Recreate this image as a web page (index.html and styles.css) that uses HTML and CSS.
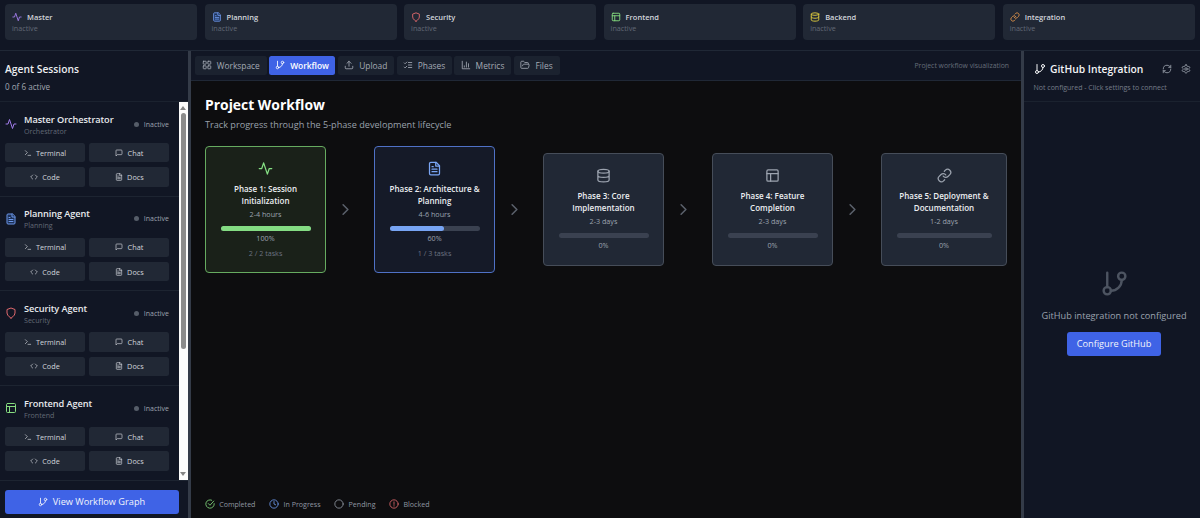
FILE: index.html
```
<!DOCTYPE html>
<html lang="en">
<head>
  <meta charset="UTF-8">
  <meta name="viewport" content="width=device-width, initial-scale=1.0">
  <title>Project Workflow</title>
  <link rel="stylesheet" href="styles.css">
</head>
<body>

  <!-- icon set -->
  <svg class="sprite">
    <symbol id="activity" viewBox="0 0 24 24"><path d="M22 12h-4l-3 9L9 3l-3 9H2"/></symbol>
    <symbol id="file" viewBox="0 0 24 24"><path d="M14.5 2H6a2 2 0 0 0-2 2v16a2 2 0 0 0 2 2h12a2 2 0 0 0 2-2V7.500z"/><path d="M14 2v6h6M16 13H8M16 17H8M10 9H8"/></symbol>
    <symbol id="shield" viewBox="0 0 24 24"><path d="M12 22s8-4 8-10V5l-8-3-8 3v7c0 6 8 10 8 10z"/></symbol>
    <symbol id="layout" viewBox="0 0 24 24"><rect x="3" y="3" width="18" height="18" rx="2"/><path d="M3 9h18M9 21V9"/></symbol>
    <symbol id="database" viewBox="0 0 24 24"><ellipse cx="12" cy="5" rx="9" ry="3"/><path d="M3 5v14c0 1.700 4 3 9 3s9-1.300 9-3V5M3 12c0 1.700 4 3 9 3s9-1.300 9-3"/></symbol>
    <symbol id="link" viewBox="0 0 24 24"><path d="M10 13a5 5 0 0 0 7.540.540l3-3a5 5 0 0 0-7.070-7.070l-1.720 1.710"/><path d="M14 11a5 5 0 0 0-7.540-.540l-3 3a5 5 0 0 0 7.070 7.070l1.710-1.710"/></symbol>
    <symbol id="branch" viewBox="0 0 24 24"><path d="M6 3v12"/><circle cx="18" cy="6" r="3"/><circle cx="6" cy="18" r="3"/><path d="M18 9a9 9 0 0 1-9 9"/></symbol>
    <symbol id="grid" viewBox="0 0 24 24"><rect x="3" y="3" width="7" height="7" rx="1"/><rect x="14" y="3" width="7" height="7" rx="1"/><rect x="14" y="14" width="7" height="7" rx="1"/><rect x="3" y="14" width="7" height="7" rx="1"/></symbol>
    <symbol id="upload" viewBox="0 0 24 24"><path d="M21 15v4a2 2 0 0 1-2 2H5a2 2 0 0 1-2-2v-4M17 8l-5-5-5 5M12 3v12"/></symbol>
    <symbol id="checks" viewBox="0 0 24 24"><path d="M3 17l2 2 4-4M3 7l2 2 4-4M13 6h8M13 12h8M13 18h8"/></symbol>
    <symbol id="chart" viewBox="0 0 24 24"><path d="M3 3v18h18M18 17V9M13 17V5M8 17v-3"/></symbol>
    <symbol id="folder" viewBox="0 0 24 24"><path d="M6 14l1.450-2.900A2 2 0 0 1 9.240 10H20a2 2 0 0 1 1.940 2.500l-1.550 6a2 2 0 0 1-1.940 1.500H4a2 2 0 0 1-2-2V5c0-1.100.900-2 2-2h3.930a2 2 0 0 1 1.660.900l.820 1.200a2 2 0 0 0 1.660.900H18a2 2 0 0 1 2 2v2"/></symbol>
    <symbol id="terminal" viewBox="0 0 24 24"><path d="M4 17l6-6-6-6M12 19h8"/></symbol>
    <symbol id="chat" viewBox="0 0 24 24"><path d="M21 15a2 2 0 0 1-2 2H7l-4 4V5a2 2 0 0 1 2-2h14a2 2 0 0 1 2 2z"/></symbol>
    <symbol id="code" viewBox="0 0 24 24"><path d="M16 18l6-6-6-6M8 6l-6 6 6 6"/></symbol>
    <symbol id="chevron" viewBox="0 0 24 24"><path d="M9 18l6-6-6-6"/></symbol>
    <symbol id="refresh" viewBox="0 0 24 24"><path d="M3 12a9 9 0 0 1 9-9 9.750 9.750 0 0 1 6.740 2.740L21 8M21 3v5h-5M21 12a9 9 0 0 1-9 9 9.750 9.750 0 0 1-6.740-2.740L3 16M8 16H3v5"/></symbol>
    <symbol id="settings" viewBox="0 0 24 24"><path d="M12.220 2h-.440a2 2 0 0 0-2 2v.180a2 2 0 0 1-1 1.730l-.430.250a2 2 0 0 1-2 0l-.150-.080a2 2 0 0 0-2.730.730l-.220.380a2 2 0 0 0 .730 2.730l.150.100a2 2 0 0 1 1 1.720v.510a2 2 0 0 1-1 1.740l-.150.090a2 2 0 0 0-.730 2.730l.220.380a2 2 0 0 0 2.730.730l.150-.080a2 2 0 0 1 2 0l.430.250a2 2 0 0 1 1 1.730V20a2 2 0 0 0 2 2h.440a2 2 0 0 0 2-2v-.180a2 2 0 0 1 1-1.730l.430-.250a2 2 0 0 1 2 0l.150.080a2 2 0 0 0 2.730-.730l.220-.390a2 2 0 0 0-.730-2.730l-.150-.080a2 2 0 0 1-1-1.740v-.500a2 2 0 0 1 1-1.740l.150-.090a2 2 0 0 0 .730-2.730l-.220-.380a2 2 0 0 0-2.730-.730l-.150.080a2 2 0 0 1-2 0l-.430-.250a2 2 0 0 1-1-1.730V4a2 2 0 0 0-2-2z"/><circle cx="12" cy="12" r="3"/></symbol>
    <symbol id="check" viewBox="0 0 24 24"><path d="M22 11.080V12a10 10 0 1 1-5.930-9.140M8 11l4 4L21 5"/></symbol>
    <symbol id="clock" viewBox="0 0 24 24"><circle cx="12" cy="12" r="10"/><path d="M12 6v6l4 2"/></symbol>
    <symbol id="circle" viewBox="0 0 24 24"><circle cx="12" cy="12" r="10"/></symbol>
    <symbol id="alert" viewBox="0 0 24 24"><circle cx="12" cy="12" r="10"/><path d="M12 7v6M12 16v1"/></symbol>
  </svg>

  <header class="status-bar">
    <div class="status-card">
      <div class="status-name"><svg class="icon purple"><use href="#activity"/></svg>Master</div>
      <div class="status-text">inactive</div>
    </div>
    <div class="status-card">
      <div class="status-name"><svg class="icon blue filled"><use href="#file"/></svg>Planning</div>
      <div class="status-text">inactive</div>
    </div>
    <div class="status-card">
      <div class="status-name"><svg class="icon red"><use href="#shield"/></svg>Security</div>
      <div class="status-text">inactive</div>
    </div>
    <div class="status-card">
      <div class="status-name"><svg class="icon green"><use href="#layout"/></svg>Frontend</div>
      <div class="status-text">inactive</div>
    </div>
    <div class="status-card">
      <div class="status-name"><svg class="icon yellow"><use href="#database"/></svg>Backend</div>
      <div class="status-text">inactive</div>
    </div>
    <div class="status-card">
      <div class="status-name"><svg class="icon orange"><use href="#link"/></svg>Integration</div>
      <div class="status-text">inactive</div>
    </div>
  </header>

  <div class="layout">
    <aside class="sidebar">
      <div class="sidebar-header">
        <h2>Agent Sessions</h2>
        <p>0 of 6 active</p>
      </div>
      <div class="sidebar-body">
        <div class="agent-list">
          <div class="agent">
            <div class="agent-head">
              <svg class="icon purple"><use href="#activity"/></svg>
              <div class="agent-title"><h3>Master Orchestrator</h3><p>Orchestrator</p></div>
              <span class="agent-state">Inactive</span>
            </div>
            <div class="agent-actions">
              <button><svg class="icon"><use href="#terminal"/></svg>Terminal</button>
              <button><svg class="icon"><use href="#chat"/></svg>Chat</button>
              <button><svg class="icon"><use href="#code"/></svg>Code</button>
              <button><svg class="icon"><use href="#file"/></svg>Docs</button>
            </div>
          </div>
          <div class="agent">
            <div class="agent-head">
              <svg class="icon blue filled"><use href="#file"/></svg>
              <div class="agent-title"><h3>Planning Agent</h3><p>Planning</p></div>
              <span class="agent-state">Inactive</span>
            </div>
            <div class="agent-actions">
              <button><svg class="icon"><use href="#terminal"/></svg>Terminal</button>
              <button><svg class="icon"><use href="#chat"/></svg>Chat</button>
              <button><svg class="icon"><use href="#code"/></svg>Code</button>
              <button><svg class="icon"><use href="#file"/></svg>Docs</button>
            </div>
          </div>
          <div class="agent">
            <div class="agent-head">
              <svg class="icon red"><use href="#shield"/></svg>
              <div class="agent-title"><h3>Security Agent</h3><p>Security</p></div>
              <span class="agent-state">Inactive</span>
            </div>
            <div class="agent-actions">
              <button><svg class="icon"><use href="#terminal"/></svg>Terminal</button>
              <button><svg class="icon"><use href="#chat"/></svg>Chat</button>
              <button><svg class="icon"><use href="#code"/></svg>Code</button>
              <button><svg class="icon"><use href="#file"/></svg>Docs</button>
            </div>
          </div>
          <div class="agent">
            <div class="agent-head">
              <svg class="icon green"><use href="#layout"/></svg>
              <div class="agent-title"><h3>Frontend Agent</h3><p>Frontend</p></div>
              <span class="agent-state">Inactive</span>
            </div>
            <div class="agent-actions">
              <button><svg class="icon"><use href="#terminal"/></svg>Terminal</button>
              <button><svg class="icon"><use href="#chat"/></svg>Chat</button>
              <button><svg class="icon"><use href="#code"/></svg>Code</button>
              <button><svg class="icon"><use href="#file"/></svg>Docs</button>
            </div>
          </div>
        </div>
        <div class="scrollbar">
          <span class="arrow-up"></span>
          <span class="thumb"></span>
          <span class="arrow-down"></span>
        </div>
      </div>
      <div class="sidebar-footer">
        <button class="primary-btn"><svg class="icon"><use href="#branch"/></svg>View Workflow Graph</button>
      </div>
    </aside>

    <main class="main">
      <nav class="tabs">
        <button class="tab tab-workspace"><svg class="icon"><use href="#grid"/></svg>Workspace</button>
        <button class="tab tab-workflow active"><svg class="icon"><use href="#branch"/></svg>Workflow</button>
        <button class="tab tab-upload"><svg class="icon"><use href="#upload"/></svg>Upload</button>
        <button class="tab tab-phases"><svg class="icon"><use href="#checks"/></svg>Phases</button>
        <button class="tab tab-metrics"><svg class="icon"><use href="#chart"/></svg>Metrics</button>
        <button class="tab tab-files"><svg class="icon"><use href="#folder"/></svg>Files</button>
        <span class="tabs-note">Project workflow visualization</span>
      </nav>

      <section class="workflow">
        <h1>Project Workflow</h1>
        <p class="subtitle">Track progress through the 5-phase development lifecycle</p>

        <div class="phases">
          <div class="phase completed">
            <svg class="icon"><use href="#activity"/></svg>
            <h4>Phase 1: Session<br>Initialization</h4>
            <p class="duration">2-4 hours</p>
            <div class="progress"><div class="progress-fill" style="width: 100%"></div></div>
            <p class="percent">100%</p>
            <p class="tasks">2 / 2 tasks</p>
          </div>
          <svg class="icon chevron"><use href="#chevron"/></svg>
          <div class="phase in-progress">
            <svg class="icon"><use href="#file"/></svg>
            <h4>Phase 2: Architecture &amp;<br>Planning</h4>
            <p class="duration">4-6 hours</p>
            <div class="progress"><div class="progress-fill" style="width: 60%"></div></div>
            <p class="percent">60%</p>
            <p class="tasks">1 / 3 tasks</p>
          </div>
          <svg class="icon chevron"><use href="#chevron"/></svg>
          <div class="phase">
            <svg class="icon"><use href="#database"/></svg>
            <h4>Phase 3: Core<br>Implementation</h4>
            <p class="duration">2-3 days</p>
            <div class="progress"></div>
            <p class="percent">0%</p>
          </div>
          <svg class="icon chevron"><use href="#chevron"/></svg>
          <div class="phase">
            <svg class="icon"><use href="#layout"/></svg>
            <h4>Phase 4: Feature<br>Completion</h4>
            <p class="duration">2-3 days</p>
            <div class="progress"></div>
            <p class="percent">0%</p>
          </div>
          <svg class="icon chevron"><use href="#chevron"/></svg>
          <div class="phase last">
            <svg class="icon"><use href="#link"/></svg>
            <h4>Phase 5: Deployment &amp;<br>Documentation</h4>
            <p class="duration">1-2 days</p>
            <div class="progress"></div>
            <p class="percent">0%</p>
          </div>
        </div>

        <div class="legend">
          <span><svg class="icon green"><use href="#check"/></svg>Completed</span>
          <span><svg class="icon blue"><use href="#clock"/></svg>In Progress</span>
          <span><svg class="icon"><use href="#circle"/></svg>Pending</span>
          <span><svg class="icon red"><use href="#alert"/></svg>Blocked</span>
        </div>
      </section>
    </main>

    <aside class="github">
      <div class="github-header">
        <div class="github-title">
          <svg class="icon"><use href="#branch"/></svg>
          <h2>GitHub Integration</h2>
          <svg class="icon tool"><use href="#refresh"/></svg>
          <svg class="icon tool"><use href="#settings"/></svg>
        </div>
        <p>Not configured - Click settings to connect</p>
      </div>
      <div class="github-empty">
        <svg class="icon"><use href="#branch"/></svg>
        <p>GitHub integration not configured</p>
        <button class="primary-btn">Configure GitHub</button>
      </div>
    </aside>
  </div>

</body>
</html>
```
FILE: styles.css
```
* {
  box-sizing: border-box;
}
body {
  font-family: "Segoe UI", "Open Sans", "Noto Sans", sans-serif;
  font-size: 8px;
  margin: 0;
  height: 518px;
  display: flex;
  flex-direction: column;
  overflow: hidden;
  background-color: #0d0d0f;
  color: #d1d5db;
}
h1, h2, h3, h4, p {
  margin: 0;
  white-space: nowrap;
}
h2, h3, h4 {
  font-weight: 600;
}
button {
  font: inherit;
  color: inherit;
  border: none;
  border-radius: 2.5px;
  padding: 0;
  display: flex;
  align-items: center;
  justify-content: center;
  white-space: nowrap;
  cursor: pointer;
}

/* icons */
.sprite {
  display: none;
}
.icon {
  width: 10px;
  height: 10px;
  flex: none;
  fill: none;
  stroke: currentColor;
  stroke-width: 2;
  stroke-linecap: round;
  stroke-linejoin: round;
}
.filled {
  fill: #1d3157;
}
.purple { color: #a07be8; }
.blue { color: #6c97ea; }
.red { color: #e0696d; }
.green { color: #86dd80; }
.yellow { color: #e3cf3e; }
.orange { color: #d98e48; }

/* top status cards */
.status-bar {
  height: 51px;
  flex: none;
  display: grid;
  grid-template-columns: repeat(6, 1fr);
  gap: 7.2px;
  padding: 4px 5px 10px;
  background-color: #111624;
  border-bottom: 1px solid #202836;
}
.status-card {
  background-color: #212835;
  border-radius: 4px;
  padding: 7px 7px 5px;
}
.status-name {
  display: flex;
  align-items: center;
  gap: 5px;
  height: 11px;
  font-size: 7.5px;
  font-weight: 600;
}
.status-name .icon {
  stroke-width: 2.2;
}
.status-text {
  line-height: 12px;
  font-size: 7.2px;
  color: #626975;
}

.layout {
  flex: 1;
  min-height: 0;
  display: flex;
}

/* left sidebar */
.sidebar {
  width: 191px;
  flex: none;
  display: flex;
  flex-direction: column;
  background-color: #111624;
  border-right: 3px solid #343b48;
}
.sidebar-header {
  height: 51px;
  padding: 10px 5px 0;
  border-bottom: 1px solid #1b222f;
}
.sidebar-header h2 {
  font-size: 10.3px;
  line-height: 16px;
  color: #eceef1;
}
.sidebar-header p {
  margin-top: 1.5px;
  font-size: 8.1px;
  line-height: 15px;
  color: #a1a7b1;
}
.sidebar-body {
  height: 377.5px;
  flex: none;
  display: flex;
}
.agent-list {
  flex: 1;
  overflow: hidden;
}
.agent {
  height: 94.7px;
  padding: 9px 9.5px 0 5px;
  border-bottom: 1px solid #1d2431;
}
.agent-head {
  display: flex;
  align-items: center;
  height: 26px;
}
.agent-head .icon {
  width: 12px;
  height: 12px;
}
.agent-title {
  flex: 1;
  margin-left: 7px;
  padding-top: 1px;
}
.agent-title h3 {
  font-size: 9.2px;
  letter-spacing: -0.08px;
  line-height: 13px;
  color: #e8eaed;
}
.agent-title p {
  font-size: 7.1px;
  line-height: 11px;
  color: #626975;
}
.agent-state {
  display: flex;
  align-items: center;
  gap: 5px;
  font-size: 7px;
  color: #9ca3af;
}
.agent-state::before {
  content: "";
  width: 5px;
  height: 5px;
  border-radius: 50%;
  background-color: #565d69;
}
.agent-actions {
  margin-top: 6px;
  display: grid;
  grid-template-columns: 1fr 1fr;
  grid-auto-rows: 19.4px;
  gap: 4.8px;
}
.agent-actions button {
  background-color: #212835;
  gap: 4.5px;
  font-size: 7.3px;
}
.agent-actions .icon {
  width: 8px;
  height: 8px;
}
.scrollbar {
  width: 9.5px;
  display: flex;
  flex-direction: column;
  align-items: center;
  padding: 4px 0;
  background-color: #fcfcfc;
}
.arrow-up, .arrow-down {
  border: 3px solid transparent;
}
.arrow-up {
  border-top: none;
  border-bottom: 4px solid #858585;
}
.arrow-down {
  margin-top: auto;
  border-bottom: none;
  border-top: 4px solid #858585;
}
.thumb {
  width: 5.5px;
  height: 236px;
  margin-top: 3px;
  border-radius: 3px;
  background-color: #8b8b8b;
}
.sidebar-footer {
  flex: 1;
  padding: 9px 9.5px 0 5px;
  border-top: 1px solid #1d2431;
}
.primary-btn {
  background-color: #3f63e6;
  color: #f3f5fb;
  border-radius: 3px;
  font-size: 9.2px;
}
.sidebar-footer .primary-btn {
  width: 100%;
  height: 24.5px;
  gap: 4.5px;
}

/* main area */
.main {
  flex: 1;
  min-width: 0;
  display: flex;
  flex-direction: column;
}
.tabs {
  height: 29.5px;
  flex: none;
  display: flex;
  align-items: center;
  gap: 2.5px;
  padding: 0 12px 0 4px;
  background-color: #111624;
  border-bottom: 1px solid #202836;
}
.tab {
  height: 19.5px;
  gap: 5px;
  background-color: #1b222f;
  color: #a4aab4;
  font-size: 8.4px;
}
.tab.active {
  background-color: #3f63e6;
  color: #fff;
  font-weight: 600;
}
.tab-workspace { width: 71.5px; }
.tab-workflow { width: 66px; }
.tab-upload { width: 56.5px; }
.tab-phases { width: 55px; }
.tab-metrics { width: 57px; }
.tab-files { width: 46px; }
.tabs-note {
  margin-left: auto;
  font-size: 6.85px;
  color: #676e7a;
}
.workflow {
  flex: 1;
  display: flex;
  flex-direction: column;
  padding: 14.5px 14px 8px;
}
.workflow h1 {
  font-size: 13.9px;
  line-height: 20px;
  color: #fff;
}
.subtitle {
  margin-top: 2.5px;
  font-size: 9.15px;
  line-height: 14px;
  color: #9aa1ac;
}
.phases {
  display: flex;
  align-items: center;
  margin-top: 14px;
}
.phase {
  width: 121px;
  padding: 14px 14.5px 13.5px;
  flex: none;
  text-align: center;
  color: #9ca3af;
  background-color: #212835;
  border: 1px solid #464d59;
  border-radius: 4px;
}
.phase.last {
  width: 126px;
}
.phase > .icon {
  display: block;
  width: 15px;
  height: 15px;
  margin: 0 auto 7.5px;
}
.phase h4 {
  font-size: 8px;
  line-height: 12px;
  color: #eceef1;
}
.duration, .percent, .tasks {
  font-size: 7.2px;
  line-height: 12px;
}
.duration {
  margin-top: 1px;
}
.progress {
  height: 5px;
  margin: 5.5px 0 1.5px;
  border-radius: 3px;
  background-color: #3a4150;
}
.progress-fill {
  height: 100%;
  border-radius: 3px;
}
.tasks {
  margin-top: 2.5px;
  color: #6b7280;
}
.completed {
  background-color: #1a2119;
  border-color: #66ab60;
}
.completed .icon {
  color: #86e184;
}
.completed .progress-fill {
  background-color: #84dc83;
}
.in-progress {
  background-color: #151a28;
  border-color: #4f71c6;
}
.in-progress .icon {
  color: #7aa5f4;
}
.in-progress .progress-fill {
  background-color: #77a4f3;
}
.chevron {
  width: 19px;
  height: 19px;
  margin: 0 19.500px 0 9.500px;
  color: #5a606b;
}
.legend {
  display: flex;
  gap: 13.8px;
  margin-top: auto;
  font-size: 7.1px;
  line-height: 12px;
  color: #9097a2;
}
.legend span {
  display: flex;
  align-items: center;
  gap: 4.2px;
}

/* github panel */
.github {
  width: 179px;
  flex: none;
  display: flex;
  flex-direction: column;
  background-color: #111624;
  border-left: 3px solid #343b48;
}
.github-header {
  height: 51px;
  flex: none;
  padding: 9.5px 9px 0 9.5px;
  border-bottom: 1px solid #1b222f;
}
.github-title {
  display: flex;
  align-items: center;
  height: 17px;
  color: #f3f4f6;
}
.github-title h2 {
  flex: 1;
  margin-left: 4.5px;
  font-size: 10.3px;
}
.github-title .icon {
  width: 12px;
  height: 12px;
}
.github-title .tool {
  width: 10px;
  height: 10px;
  margin-left: 9.5px;
  color: #9ca3af;
}
.github-header p {
  margin-top: 4px;
  font-size: 7px;
  line-height: 12px;
  color: #757c88;
}
.github-empty {
  flex: 1;
  display: flex;
  flex-direction: column;
  align-items: center;
  padding-top: 167px;
  padding-left: 4px;
}
.github-empty .icon {
  width: 29px;
  height: 29px;
  color: #4d5461;
}
.github-empty p {
  margin-top: 10px;
  font-size: 9.2px;
  line-height: 15px;
  color: #9ca3af;
}
.github-empty .primary-btn {
  width: 94.5px;
  height: 24.5px;
  margin-top: 8.5px;
}
```
